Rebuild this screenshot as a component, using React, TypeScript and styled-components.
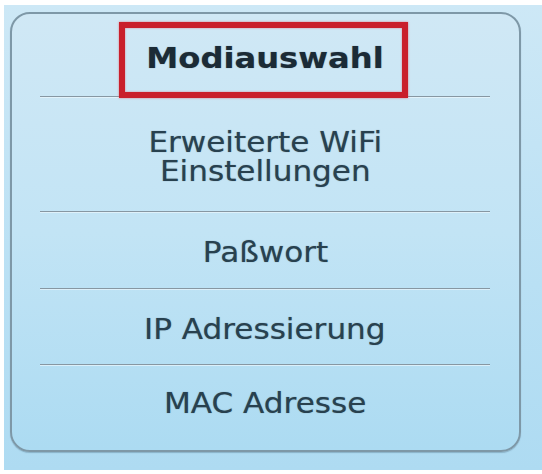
import styled, { createGlobalStyle } from "styled-components";

const GlobalStyle = createGlobalStyle`
  html, body {
    margin: 0;
    padding: 0;
    background: #ffffff;
  }
  body {
    font-family: "DejaVu Sans", Verdana, sans-serif;
  }
`;

const Backdrop = styled.div`
  box-sizing: border-box;
  margin: 5px 0 0 4px;
  width: 538px;
  height: 465px;
  padding: 7px 0 0 6px;
  background: linear-gradient(180deg, #cde8f6 0%, #b9e0f4 60%, #aedbf2 100%);
`;

const Panel = styled.nav`
  position: relative;
  box-sizing: border-box;
  width: 511px;
  height: 440px;
  padding: 0 29px 0 28px;
  border: 2px solid #7e98a7;
  border-radius: 20px;
  background: linear-gradient(180deg, #d0e8f5 0%, #c2e4f5 50%, #acdbf2 100%);
  box-shadow: 0 1px 1px rgba(70, 100, 120, 0.35);
`;

const List = styled.ul`
  list-style: none;
  margin: 0;
  padding: 0;
  display: flex;
  flex-direction: column;
`;

const Item = styled.li<{ $height: number; $last?: boolean }>`
  box-sizing: border-box;
  height: ${({ $height }) => $height}px;
  display: flex;
  align-items: center;
  justify-content: center;
  padding: ${({ $last }) => ($last ? "0 0 7px" : "7px 0 0")};
  border-bottom: ${({ $last }) => ($last ? "none" : "1px solid #8797a2")};
  box-shadow: ${({ $last }) => ($last ? "none" : "0 1px 0 rgba(235, 247, 252, 0.7)")};
`;

const Label = styled.span<{ $active?: boolean }>`
  display: inline-block;
  transform: scaleX(1.11);
  text-align: center;
  font-size: ${({ $active }) => ($active ? 29 : 28)}px;
  line-height: 28.5px;
  font-weight: ${({ $active }) => ($active ? 700 : 400)};
  color: ${({ $active }) => ($active ? "#1b2b36" : "#28414f")};
  text-shadow: 0 0 1px rgba(40, 65, 79, 0.55);
  cursor: pointer;
`;

const Line = styled.span`
  display: block;
`;

// red highlight drawn over the selected entry
const Highlight = styled.div`
  position: absolute;
  left: 107px;
  top: 8px;
  width: 289px;
  height: 76px;
  box-sizing: border-box;
  border: 6px solid #c91f2b;
  box-shadow: 0 0 2px rgba(230, 80, 90, 0.7), inset 0 0 2px rgba(230, 80, 90, 0.7);
  pointer-events: none;
`;

const items = [
  { id: "mode", lines: ["Modiauswahl"], height: 83, active: true },
  { id: "wifi", lines: ["Erweiterte WiFi", "Einstellungen"], height: 115 },
  { id: "password", lines: ["Paßwort"], height: 77 },
  { id: "ip", lines: ["IP Adressierung"], height: 76 },
  { id: "mac", lines: ["MAC Adresse"], height: 85 },
];

export default function App() {
  return (
    <>
      <GlobalStyle />
      <Backdrop>
        <Panel>
          <List>
            {items.map((item, i) => (
              <Item key={item.id} $height={item.height} $last={i === items.length - 1}>
                <Label $active={item.active}>
                  {item.lines.map((line) => (
                    <Line key={line}>{line}</Line>
                  ))}
                </Label>
              </Item>
            ))}
          </List>
          <Highlight />
        </Panel>
      </Backdrop>
    </>
  );
}
